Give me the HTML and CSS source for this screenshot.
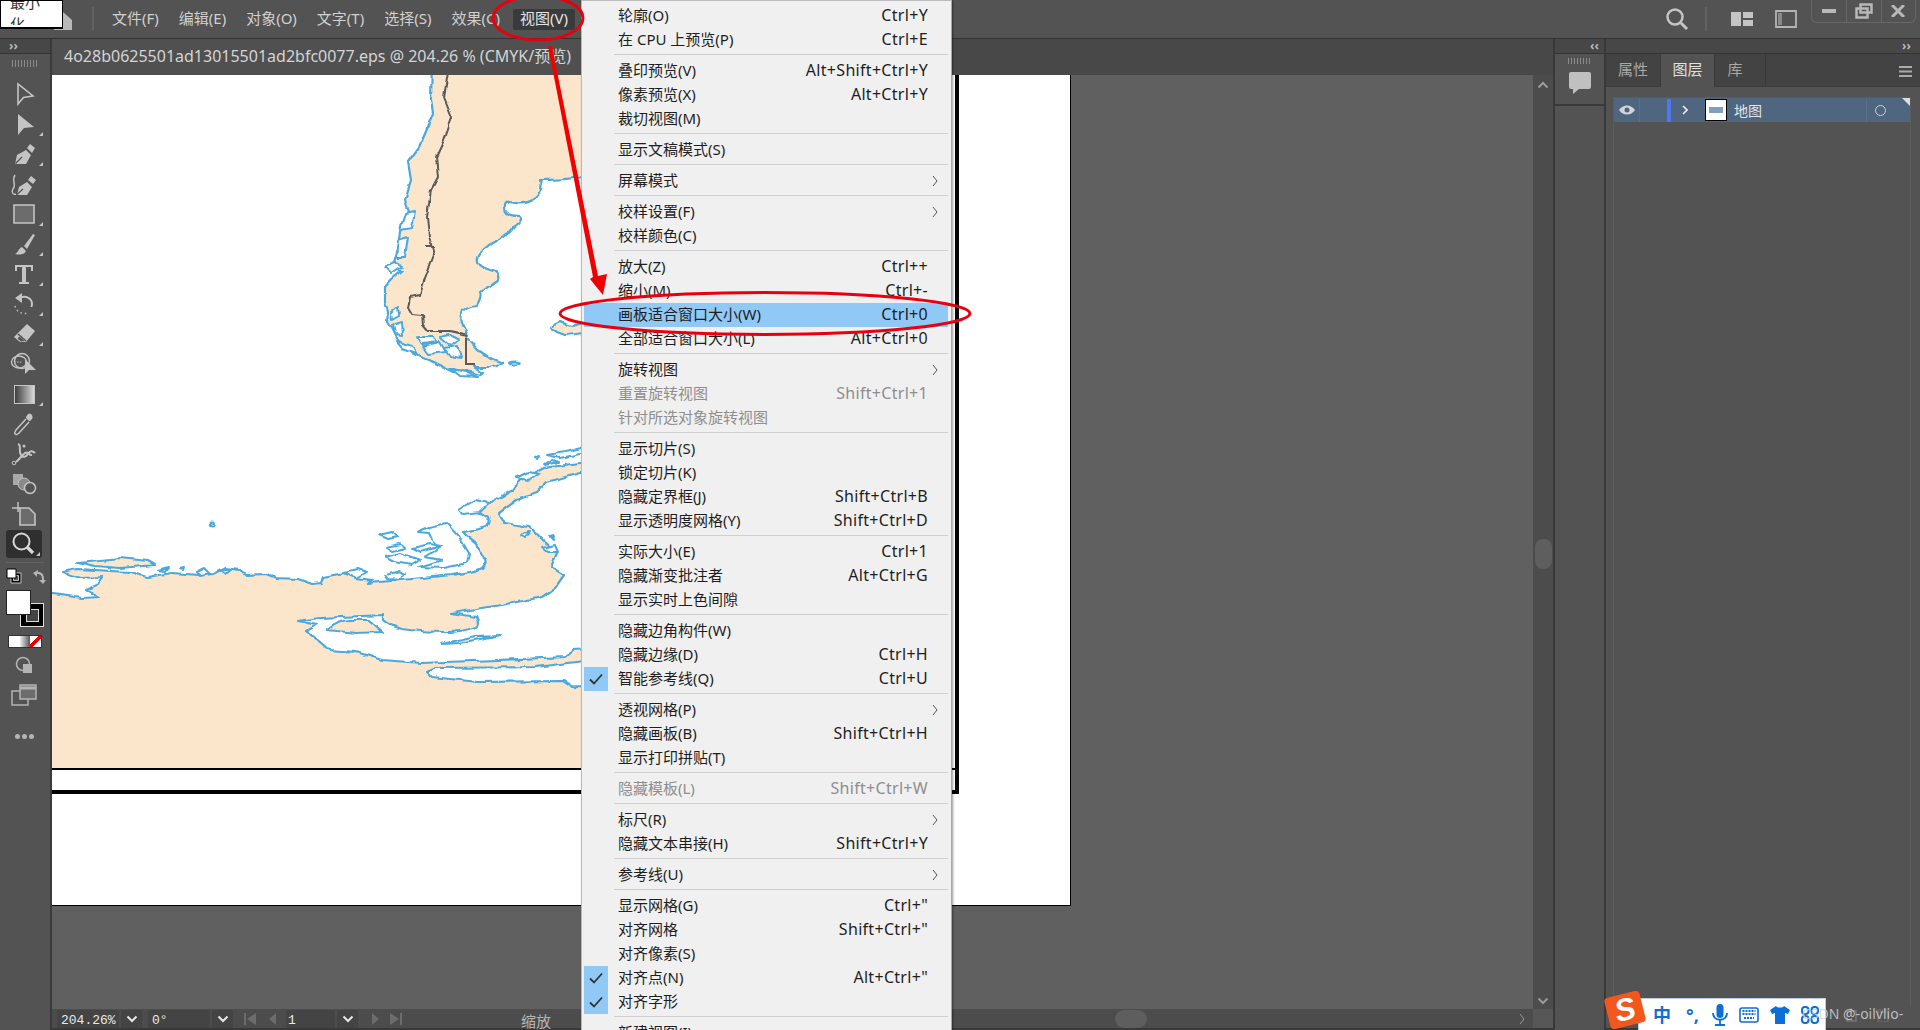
FILE: index.html
```html
<!DOCTYPE html>
<html lang="zh-CN">
<head>
<meta charset="utf-8">
<title>Illustrator</title>
<link rel="stylesheet" href="styles.css">
</head>
<body>
<svg class="defs" width="0" height="0">
  <symbol id="chev-d" viewBox="0 0 12 8"><path d="M1.5 1.5 6 6l4.500-4.500" fill="none" stroke="currentColor" stroke-width="2"/></symbol>
  <symbol id="chev-r" viewBox="0 0 6 12"><path d="M1 1l4 5-4 5" fill="none" stroke="currentColor" stroke-width="1"/></symbol>
  <symbol id="check" viewBox="0 0 14 12"><path d="M1 6.500 5 10.500 13 1.500" fill="none" stroke="currentColor" stroke-width="1.800"/></symbol>
  <filter id="rough" x="-5%" y="-5%" width="110%" height="110%"><feTurbulence type="fractalNoise" baseFrequency="0.09" numOctaves="2" seed="4"/><feDisplacementMap in="SourceGraphic" scale="5" xChannelSelector="R" yChannelSelector="G"/></filter>
</svg>
<div class="app">
  <header class="topbar">
    <svg class="home" width="22" height="22" viewBox="0 0 22 22"><path d="M2 10 11 2l9 8v10H2z" fill="#b8b8b8"/></svg>
    <span class="vsep"></span>
    <nav class="mainmenu">
      <span class="mm">文件(F)</span><span class="mm">编辑(E)</span><span class="mm">对象(O)</span><span class="mm">文字(T)</span><span class="mm">选择(S)</span><span class="mm">效果(C)</span><span class="mm active">视图(V)</span>
    </nav>
    <div class="topright">
      <svg width="24" height="24" viewBox="0 0 24 24"><circle cx="10" cy="10" r="7.500" fill="none" stroke="#c4c4c4" stroke-width="2.500"/><path d="M15.500 15.500 22 22" stroke="#c4c4c4" stroke-width="3"/></svg>
      <span class="vsep sep2"></span>
      <svg class="tr2" width="24" height="16" viewBox="0 0 24 16"><path d="M1 1h10v14H1zM13 1h10v6H13zM13 9h10v6H13z" fill="#c4c4c4"/></svg>
      <svg class="tr3" width="22" height="18" viewBox="0 0 22 18"><path d="M1 1h20v16H1z" fill="none" stroke="#b4b4b4" stroke-width="1.800"/><path d="M3 3h4v12H3z" fill="#8a8a8a"/></svg>
      <div class="winbtns">
        <span class="wb"><svg width="14" height="6"><path d="M0 1h14v4H0z" fill="#b8b8b8"/></svg></span>
        <span class="wb"><svg width="18" height="16" viewBox="0 0 18 16"><path d="M5.500 1.500h11v8h-11zM1.500 5.500h11v9h-11z" fill="none" stroke="#b8b8b8" stroke-width="2.500"/></svg></span>
        <span class="wb"><svg width="14" height="12" viewBox="0 0 14 12"><path d="M1 0l12 12M13 0 1 12" stroke="#b8b8b8" stroke-width="3"/></svg></span>
      </div>
    </div>
  </header>

  <div class="work">
    <aside class="toolbar">
      <div class="strip"><span class="dbl">››</span></div>
      <div class="grip"></div>
      <div class="tools">
        <div class="tool"><svg width="24" height="24" viewBox="0 0 24 24"><path d="M6 2v20l5.500-6.500L21 14z" fill="none" stroke="#c4c4c4" stroke-width="1.600"/></svg></div>
        <div class="tool more"><svg width="24" height="24" viewBox="0 0 24 24"><path d="M6 2v21l6-7 10-1z" fill="#c4c4c4"/></svg></div>
        <div class="tool more"><svg width="24" height="24" viewBox="0 0 24 24"><path d="M3 22l2-9 9-5 5 5-5 9zM15 6l3-4 5 4-3 5z" fill="#c4c4c4"/><path d="M3.500 21.500 10 15" stroke="#535353" stroke-width="1.200"/></svg></div>
        <div class="tool"><svg width="28" height="24" viewBox="0 0 28 24"><path d="M7 23l2-8 8-5 5 5-5 8zM18 8l3-4 5 4-3 4z" fill="#c4c4c4"/><path d="M7 22.500 13 17" stroke="#535353" stroke-width="1.200"/><path d="M5 3C1 9 7 12 3 17c-2 3 0 6 3 5" fill="none" stroke="#c4c4c4" stroke-width="1.400"/></svg></div>
        <div class="tool more"><svg width="24" height="22" viewBox="0 0 24 22"><path d="M2 2h20v18H2z" fill="#6c6c6c" stroke="#c4c4c4" stroke-width="1.600"/></svg></div>
        <div class="tool more"><svg width="24" height="24" viewBox="0 0 24 24"><path d="M21 2 12 14l3 3 8-14zM10 15l4 4c-2 4-6 4-11 3 3-1 3-5 7-7z" fill="#c4c4c4"/></svg></div>
        <div class="tool more"><svg width="24" height="24" viewBox="0 0 24 24"><path d="M3 3h18v6h-2V5h-5v15h3v2H7v-2h3V5H5v4H3z" fill="#c4c4c4"/></svg></div>
        <div class="tool more"><svg width="24" height="24" viewBox="0 0 24 24"><path d="M8 6c5-3 12 0 12 6 0 1-.3 2-.7 3" fill="none" stroke="#c4c4c4" stroke-width="2"/><path d="M10 1v10L3 6z" fill="#c4c4c4"/><path d="M3 14c1 5 6 9 14 7" fill="none" stroke="#c4c4c4" stroke-width="1.400" stroke-dasharray="1.500 3"/></svg></div>
        <div class="tool more"><svg width="24" height="24" viewBox="0 0 24 24"><path d="M15 2l8 7-9 11H8l-6-5z" fill="#c4c4c4"/><path d="M6 12l8 7" stroke="#535353" stroke-width="1.500"/><path d="M7.500 14.500l5 4.500-3.500.5-3.500-3z" fill="#535353"/></svg></div>
        <div class="tool"><svg width="28" height="24" viewBox="0 0 28 24"><ellipse cx="9" cy="10" rx="7.500" ry="6" fill="none" stroke="#c4c4c4" stroke-width="1.400"/><circle cx="12" cy="9" r="7.500" fill="none" stroke="#c4c4c4" stroke-width="1.400"/><path d="M4 10h9" stroke="#c4c4c4" stroke-dasharray="1.500 1.500"/><path d="M15 7v15l4-4 7 0z" fill="#c4c4c4"/></svg></div>
        <div class="tool more"><div class="gradbox"></div></div>
        <div class="tool"><svg width="24" height="24" viewBox="0 0 24 24"><path d="M16 2c2-2 6 2 4 5l-2 2-1 0-3-3 0-1z" fill="#c4c4c4"/><path d="M14 7 4 18c-1 2-2 3-1 4s3 0 4-1L17 10" fill="none" stroke="#c4c4c4" stroke-width="1.500"/></svg></div>
        <div class="tool"><svg width="26" height="24" viewBox="0 0 26 24"><path d="M7 2c4 1 0 7 3 11 2 3 5 2 7-1 2-3 4-4 7-1M5 20c3-2 5-6 9-9 3-2 4 3 7 2" fill="none" stroke="#c4c4c4" stroke-width="2"/><circle cx="3" cy="21" r="1.800" fill="none" stroke="#c4c4c4"/><circle cx="13" cy="4" r="1.500" fill="#c4c4c4"/></svg></div>
        <div class="tool"><svg width="26" height="24" viewBox="0 0 26 24"><path d="M2 2h10v11H2z" fill="#a8a8a8"/><circle cx="13" cy="12" r="6" fill="#8a8a8a" stroke="#c4c4c4"/><circle cx="19" cy="16" r="5.500" fill="#535353" stroke="#c4c4c4" stroke-width="1.500"/></svg></div>
        <div class="tool"><svg width="26" height="24" viewBox="0 0 26 24"><path d="M7 0v10M1 6h8" stroke="#c4c4c4" stroke-width="1.400"/><path d="M9 6h9l6 6v11H9z" fill="#6c6c6c" stroke="#c4c4c4" stroke-width="1.600"/></svg></div>
        <div class="tool current"><svg width="26" height="26" viewBox="0 0 26 26"><circle cx="10.500" cy="10.500" r="8" fill="none" stroke="#d8d8d8" stroke-width="2"/><path d="M16 16l6 6" stroke="#d8d8d8" stroke-width="3.200"/></svg></div>
      </div>
      <div class="toolsep"></div>
      <div class="swaprow">
        <svg width="16" height="16" viewBox="0 0 16 16"><path d="M5 5h10v10H5z" fill="#000" stroke="#c4c4c4"/><path d="M7.500 7.500h5v5h-5z" fill="#535353" stroke="#c4c4c4"/><path d="M1 1h9v9H1z" fill="#fff" stroke="#000"/></svg>
        <svg width="15" height="16" viewBox="0 0 15 16"><path d="M7 2 2 5l4 4V6c4 0 5 2 5 6H8l4 4 3-4h-2c0-6-2-8-6-8z" fill="#b4b4b4"/></svg>
      </div>
      <div class="fillstroke">
        <div class="stroke"></div>
        <div class="fill"></div>
      </div>
      <div class="modes"><span class="m-w"></span><span class="m-g"></span><span class="m-n"></span></div>
      <div class="tool2"><svg width="18" height="18" viewBox="0 0 18 18"><circle cx="8" cy="8" r="6.500" fill="none" stroke="#b4b4b4" stroke-width="1.500"/><path d="M8 8h9v9H8z" fill="#b4b4b4"/></svg></div>
      <div class="tool2 t3"><svg width="26" height="22" viewBox="0 0 26 22"><path d="M1 7h16v14H1z" fill="none" stroke="#b4b4b4" stroke-width="1.500"/><path d="M9 1h16v14H9z" fill="#6c6c6c" stroke="#b4b4b4" stroke-width="1.500"/><path d="M9 4h16" stroke="#b4b4b4" stroke-width="3"/></svg></div>
      <div class="dots"><i></i><i></i><i></i></div>
    </aside>

    <main class="doc">
      <div class="doctabs"><div class="doctab">4o28b0625501ad13015501ad2bfc0077.eps @ 204.26 % (CMYK/预览)</div></div>
      <div class="docbody">
        <div class="canvas">
          <div class="artboard">
            <svg class="map" width="1018" height="830" viewBox="52 75 1018 830">
              <g filter="url(#rough)">
              <g fill="#fbe6cc" stroke="#4aa9df" stroke-width="2.200" stroke-linejoin="round">
                <path d="M432 60 431 100 433 113 427 128 419 147 408 162 411 180 405 200 409 212 403 220 400 232 397 250 393 262 385 267 402 271 392 279 385 287 385 302 388 312 387 322 392 330 397 340 407 346 413 353 423 358 433 362 445 368 453 372 462 370 470 372 480 375 484 372 473 367 490 367 503 363 490 358 478 350 467 338 468 335Q458 322 461 314 464 306 477 305 482 296 480 292 490 286 498 280 500 272 490 270 476 266 478 258 482 248 497 240 510 234 513 228 524 220 520 216 505 216 505 208 504 200 510 202 525 206 536 198 542 190 540 180 560 180 574 178L600 176V60Z"/>
                <path d="M550 327 560 322 572 326 585 322 585 333 565 335 557 332Z"/>
                <path d="M40 592 82 598 99 597 86 590 98 585 103 577 80 578 63 572 78 569 111 571 130 572 147 577 172 573 199 575 214 574 226 568 239 570 245 575 266 574 276 578 298 579 312 584 321 583 323 577 344 573 356 578 373 580 369 583 402 580 452 575 Q475 572 482 568 488 562 484 558 480 548 475 543 468 538 463 532 476 530 486 527 490 522 488 517L478 510 490 503 513 490 520 480 543 468 580 463 600 462 600 473 580 473 547 482 536 493 517 500 499 513 505 523 530 527 543 540 557 553 551 567 564 575 555 588 542 597 513 603 452 613 476 617 Q480 625 476 627 460 632 448 632 420 632 402 629 388 625 383 620V615L321 618 298 621 318 625 306 632 320 642 329 650 356 652 383 660 421 663 497 660 566 657 574 650 600 648 600 659 536 667 436 668 427 672 432 677 478 682 563 681 572 687 600 688 600 785 40 785Z"/>
                <path d="M327 630Q340 620 350 620L369 620 383 632 356 633Z"/>
                <path d="M442 644 475 636 501 635 459 643Z"/>
                <path d="M77 562 100 560 120 558 148 561 155 565 120 568 95 566Z"/>
              </g>
              <g fill="#fff" stroke="#4aa9df" stroke-width="2" stroke-linejoin="round">
                <path d="M417 532 429 527 446 523 459 537 469 553 467 563 444 568 419 567 442 560 425 557 440 548 432 540 429 533Z"/>
                <path d="M379 535 392 532 398 537 388 539Z"/>
                <path d="M386 547 400 544 405 548 392 551Z"/>
                <path d="M385 557 400 553 420 560 412 565 395 562Z"/>
                <path d="M412 548 430 544 442 546 420 552Z"/>
                <path d="M459 510 475 500 490 503 480 512 462 514Z"/>
                <path d="M516 478 528 472 538 474 528 480Z"/>
                <path d="M547 455 565 452 585 447 585 453 560 458Z"/>
                <path d="M535 458 540 456 538 460Z"/>
                <path d="M545 465 553 460 558 462Z"/>
                <ellipse cx="212" cy="524" rx="2" ry="1.500"/>
                <path d="M196 572 204 568 210 574 200 576Z"/>
                <path d="M222 571 232 569 226 574Z"/>
                <path d="M158 570 168 567 165 571Z"/>
                <path d="M180 568 184 567 183 569Z"/>
                <path d="M344 572 358 569 366 572 356 578Z"/>
                <path d="M385 575 398 571 405 574 400 580 388 579Z"/>
                <path d="M520 535 530 532 525 538Z"/>
                <path d="M550 537 554 536 553 540Z"/>
                <path d="M543 548 555 545 558 552 548 552Z"/>
                <path d="M405 213 415 211 412 228 400 230Z"/>
                <path d="M398 240 408 237 405 258 396 258Z"/>
                <path d="M385 266 394 262 402 267 392 274Z"/>
                <path d="M391 312 398 306 399 316 392 320Z"/>
                <path d="M392 325 402 322 403 335 394 334Z"/>
                <path d="M417 337 432 337 438 342 422 344Z"/>
                <path d="M422 346 440 342 446 352 428 354Z"/>
                <path d="M440 337 450 335 460 340 450 346Z"/>
                <path d="M444 348 458 346 462 358 450 356Z"/>
                <path d="M396 341 412 346 418 354 402 348Z"/>
                <path d="M450 368 465 372 478 377 460 376Z"/>
                <ellipse cx="514" cy="363" rx="5" ry="1.500"/>
              </g>
              <g fill="none" stroke="#5a5a5a" stroke-width="2" stroke-linejoin="round">
                <path d="M450 60 444 97 452 117 444 140 436 157 438 177 431 190 427 217 429 237 434 255 425 278 420 295 410 297 408 308 412 315 422 316 423 325 428 331 450 331 468 335"/>
                <path d="M425 247H434"/>
              </g>
              </g>
              <path d="M466 338V364H475" fill="none" stroke="#5a5a5a" stroke-width="2"/>
              <rect x="52" y="770" width="910" height="20" fill="#fff"/>
              <path d="M52 769H955" stroke="#000" stroke-width="2"/>
              <path d="M52 792H959" stroke="#000" stroke-width="4"/>
              <path d="M957 75V794" stroke="#000" stroke-width="4"/>
            </svg>
          </div>
        </div>
        <div class="vscroll">
          <svg class="upch" width="12" height="8"><use href="#chev-d"/></svg>
          <div class="vthumb"></div>
          <svg class="downch" width="12" height="8"><use href="#chev-d"/></svg>
        </div>
      </div>
      <div class="hbar">
        <div class="st f1">204.26%</div><div class="dd"><svg width="12" height="8"><use href="#chev-d"/></svg></div>
        <div class="st f2">0°</div><div class="dd"><svg width="12" height="8"><use href="#chev-d"/></svg></div>
        <svg class="nav1" width="32" height="12" viewBox="0 0 32 12"><path d="M0 0h2v12H0zM12 0v12L3 6zM32 0v12l-7-6z" fill="#6c6c6c"/></svg>
        <div class="st f3">1</div><div class="dd"><svg width="12" height="8"><use href="#chev-d"/></svg></div>
        <svg class="nav2" width="30" height="12" viewBox="0 0 30 12"><path d="M0 0v12l7-6zM18 0v12l9-6zM28 0h2v12h-2z" fill="#6c6c6c"/></svg>
        <div class="zoomlbl">缩放</div>
        <div class="hthumb"></div>
        <svg class="hright" width="6" height="12"><use href="#chev-r"/></svg>
        <div class="corner"></div>
      </div>
    </main>

    <aside class="dockmini">
      <div class="strip"><span class="dbl rt">‹‹</span></div>
      <div class="cmt">
        <div class="grip g2"></div>
        <svg width="24" height="24" viewBox="0 0 24 24"><path d="M3 1h18a2 2 0 0 1 2 2v13a2 2 0 0 1-2 2H11l-6 5v-5H3a2 2 0 0 1-2-2V3a2 2 0 0 1 2-2z" fill="#c0c0c0"/></svg>
      </div>
    </aside>

    <aside class="panels">
      <div class="strip"><span class="dbl rt2">››</span></div>
      <div class="ptabs">
        <span class="ptab">属性</span><span class="ptab on">图层</span><span class="ptab lib">库</span>
        <svg class="hamb" width="13" height="11" viewBox="0 0 13 11"><path d="M0 0h13v2H0zM0 4.500h13v2H0zM0 9h13v2H0z" fill="#aaa"/></svg>
      </div>
      <div class="pbody">
        <div class="layer">
          <div class="eye"><svg width="16" height="10" viewBox="0 0 16 10"><path d="M0 5c4-6 12-6 16 0-4 6-12 6-16 0z" fill="#d4d4d4"/><circle cx="8" cy="5" r="2.500" fill="#4f6680"/></svg></div>
          <div class="lockcell"></div>
          <div class="lcolor"></div>
          <svg class="lchev" width="6" height="10" viewBox="0 0 6 10"><path d="M1 1l4 4-4 4" fill="none" stroke="#eee" stroke-width="1.600"/></svg>
          <div class="thumb"><i></i></div>
          <div class="lname">地图</div>
          <div class="ltarget"><span></span></div>
        </div>
      </div>
      <div class="pfoot">
        <svg width="14" height="14" viewBox="0 0 14 14"><path d="M1 3h9v10H1zM5 0v6M2 3h6" fill="none" stroke="#777" stroke-width="1.500"/></svg>
        <svg width="14" height="14" viewBox="0 0 14 14"><path d="M2 4h10v10H2zM0 2h14" fill="none" stroke="#6a6a6a" stroke-width="1.500"/></svg>
      </div>
    </aside>
  </div>

  <div class="menu">
    <div class="mi"><span class="ck"></span><span class="lb">轮廓(O)</span><span class="sc">Ctrl+Y</span></div>
    <div class="mi"><span class="ck"></span><span class="lb">在 CPU 上预览(P)</span><span class="sc">Ctrl+E</span></div>
    <div class="sep"></div>
    <div class="mi"><span class="ck"></span><span class="lb">叠印预览(V)</span><span class="sc">Alt+Shift+Ctrl+Y</span></div>
    <div class="mi"><span class="ck"></span><span class="lb">像素预览(X)</span><span class="sc">Alt+Ctrl+Y</span></div>
    <div class="mi"><span class="ck"></span><span class="lb">裁切视图(M)</span></div>
    <div class="sep"></div>
    <div class="mi"><span class="ck"></span><span class="lb">显示文稿模式(S)</span></div>
    <div class="sep"></div>
    <div class="mi"><span class="ck"></span><span class="lb">屏幕模式</span><svg class="ar" width="6" height="12"><use href="#chev-r"/></svg></div>
    <div class="sep"></div>
    <div class="mi"><span class="ck"></span><span class="lb">校样设置(F)</span><svg class="ar" width="6" height="12"><use href="#chev-r"/></svg></div>
    <div class="mi"><span class="ck"></span><span class="lb">校样颜色(C)</span></div>
    <div class="sep"></div>
    <div class="mi"><span class="ck"></span><span class="lb">放大(Z)</span><span class="sc">Ctrl++</span></div>
    <div class="mi"><span class="ck"></span><span class="lb">缩小(M)</span><span class="sc">Ctrl+-</span></div>
    <div class="mi hl"><span class="ck"></span><span class="lb">画板适合窗口大小(W)</span><span class="sc">Ctrl+0</span></div>
    <div class="mi"><span class="ck"></span><span class="lb">全部适合窗口大小(L)</span><span class="sc">Alt+Ctrl+0</span></div>
    <div class="sep"></div>
    <div class="mi"><span class="ck"></span><span class="lb">旋转视图</span><svg class="ar" width="6" height="12"><use href="#chev-r"/></svg></div>
    <div class="mi dis"><span class="ck"></span><span class="lb">重置旋转视图</span><span class="sc">Shift+Ctrl+1</span></div>
    <div class="mi dis"><span class="ck"></span><span class="lb">针对所选对象旋转视图</span></div>
    <div class="sep"></div>
    <div class="mi"><span class="ck"></span><span class="lb">显示切片(S)</span></div>
    <div class="mi"><span class="ck"></span><span class="lb">锁定切片(K)</span></div>
    <div class="mi"><span class="ck"></span><span class="lb">隐藏定界框(J)</span><span class="sc">Shift+Ctrl+B</span></div>
    <div class="mi"><span class="ck"></span><span class="lb">显示透明度网格(Y)</span><span class="sc">Shift+Ctrl+D</span></div>
    <div class="sep"></div>
    <div class="mi"><span class="ck"></span><span class="lb">实际大小(E)</span><span class="sc">Ctrl+1</span></div>
    <div class="mi"><span class="ck"></span><span class="lb">隐藏渐变批注者</span><span class="sc">Alt+Ctrl+G</span></div>
    <div class="mi"><span class="ck"></span><span class="lb">显示实时上色间隙</span></div>
    <div class="sep"></div>
    <div class="mi"><span class="ck"></span><span class="lb">隐藏边角构件(W)</span></div>
    <div class="mi"><span class="ck"></span><span class="lb">隐藏边缘(D)</span><span class="sc">Ctrl+H</span></div>
    <div class="mi"><span class="ck on"><svg width="14" height="12"><use href="#check"/></svg></span><span class="lb">智能参考线(Q)</span><span class="sc">Ctrl+U</span></div>
    <div class="sep"></div>
    <div class="mi"><span class="ck"></span><span class="lb">透视网格(P)</span><svg class="ar" width="6" height="12"><use href="#chev-r"/></svg></div>
    <div class="mi"><span class="ck"></span><span class="lb">隐藏画板(B)</span><span class="sc">Shift+Ctrl+H</span></div>
    <div class="mi"><span class="ck"></span><span class="lb">显示打印拼贴(T)</span></div>
    <div class="sep"></div>
    <div class="mi dis"><span class="ck"></span><span class="lb">隐藏模板(L)</span><span class="sc">Shift+Ctrl+W</span></div>
    <div class="sep"></div>
    <div class="mi"><span class="ck"></span><span class="lb">标尺(R)</span><svg class="ar" width="6" height="12"><use href="#chev-r"/></svg></div>
    <div class="mi"><span class="ck"></span><span class="lb">隐藏文本串接(H)</span><span class="sc">Shift+Ctrl+Y</span></div>
    <div class="sep"></div>
    <div class="mi"><span class="ck"></span><span class="lb">参考线(U)</span><svg class="ar" width="6" height="12"><use href="#chev-r"/></svg></div>
    <div class="sep"></div>
    <div class="mi"><span class="ck"></span><span class="lb">显示网格(G)</span><span class="sc">Ctrl+"</span></div>
    <div class="mi"><span class="ck"></span><span class="lb">对齐网格</span><span class="sc">Shift+Ctrl+"</span></div>
    <div class="mi"><span class="ck"></span><span class="lb">对齐像素(S)</span></div>
    <div class="mi"><span class="ck on"><svg width="14" height="12"><use href="#check"/></svg></span><span class="lb">对齐点(N)</span><span class="sc">Alt+Ctrl+"</span></div>
    <div class="mi"><span class="ck on"><svg width="14" height="12"><use href="#check"/></svg></span><span class="lb">对齐字形</span></div>
    <div class="sep"></div>
    <div class="mi"><span class="ck"></span><span class="lb">新建视图(I)</span></div>
  </div>

  <div class="tip">
    <div class="tl1"><span>最小</span></div>
    <div class="tl2"><span>化</span></div>
  </div>

  <svg class="annot" width="1920" height="1030" viewBox="0 0 1920 1030">
    <ellipse cx="538" cy="18" rx="45" ry="22" fill="none" stroke="#e8000e" stroke-width="3"/>
    <ellipse cx="765" cy="313.500" rx="205" ry="21" fill="none" stroke="#e8000e" stroke-width="3"/>
    <path d="M548 46H552L598 276 607 274 603 295 590 279 593 277Z" fill="#f00000"/>
  </svg>

  <div class="ime">
    <div class="slogo"><span>S</span></div>
    <span class="zh">中</span>
    <span class="pt">°,</span>
    <svg width="16" height="22" viewBox="0 0 16 22"><rect x="4.500" y="0" width="7" height="14" rx="3.500" fill="#0b6fd6"/><path d="M1 9c0 9 14 9 14 0M8 16v4M3 21h10" fill="none" stroke="#0b6fd6" stroke-width="1.800"/></svg>
    <svg width="20" height="16" viewBox="0 0 20 16"><rect x="1" y="1" width="18" height="14" rx="2" fill="none" stroke="#0b6fd6" stroke-width="1.600"/><path d="M3.500 4h13M3.500 7h13M5 11h10" stroke="#0b6fd6" stroke-width="2" stroke-dasharray="2 1"/></svg>
    <svg width="20" height="18" viewBox="0 0 20 18"><path d="M6 0 0 4l2 4 3-1v11h10V7l3 1 2-4-6-4c-1 2-7 2-8 0z" fill="#0b6fd6"/></svg>
    <svg width="18" height="18" viewBox="0 0 18 18"><g fill="none" stroke="#0b6fd6" stroke-width="2"><rect x="1" y="1" width="6.500" height="7" rx="3"/><rect x="10.500" y="1" width="6.500" height="7" rx="3"/><rect x="1" y="10" width="6.500" height="7" rx="3"/><rect x="10.500" y="10" width="6.500" height="7" rx="3"/></g></svg>
  </div>
  <div class="wm">CSDN @-oilvlio-</div>
</div>
</body>
</html>
```
FILE: styles.css
```css
*{box-sizing:border-box}
html,body{margin:0;padding:0;background:#535353}
body{font-family:"Noto Sans","Noto Sans CJK SC",sans-serif;font-size:15px}
.defs{position:absolute}
.app{position:relative;width:1920px;height:1030px;overflow:hidden;display:flex;flex-direction:column;background:#535353;color:#cfcfcf}

.topbar{height:39px;flex:none;display:flex;align-items:center;padding-left:52px;background:#535353;border-bottom:1px solid #333}
.home{flex:none;margin-top:3px}
.vsep{width:2px;height:24px;background:#616161;flex:none;margin-left:18px}
.mainmenu{display:flex;align-items:center;margin-left:18px;color:#d0d0d0}
.mm{margin-right:20px;line-height:18px;padding-bottom:3px;white-space:nowrap}
.mm.active{background:#3a3a3a;margin-left:-7px;padding:0 7px 3px;border-radius:2px;color:#e4e4e4;margin-right:0}
.topright{margin-left:auto;display:flex;align-items:center;height:38px}
.sep2{margin-left:16px}
.tr2{margin-left:23px}
.tr3{margin-left:21px}
.winbtns{display:flex;align-self:flex-start;margin-left:14px;margin-right:4px;height:23px;border:1px solid #676767;border-top:0;border-radius:0 0 6px 6px}
.wb{width:34.500px;display:flex;align-items:center;justify-content:center;border-left:1px solid #676767}
.wb:first-child{border-left:0}

.work{flex:1;display:flex;min-height:0}
.strip{height:15px;background:#474747;border-bottom:1px solid #333;position:relative;flex:none}
.dbl{position:absolute;font-size:12px;line-height:13px;left:9px;top:0;color:#b8b8b8;font-weight:700}
.dbl.rt{left:35px}
.dbl.rt2{left:296px}

.toolbar{width:52px;flex:none;display:flex;flex-direction:column;background:#535353;border-right:2px solid #3a3a3a}
.grip{height:7px;margin:6px 12px 0;background:repeating-linear-gradient(90deg,#8a8a8a 0 1px,transparent 1px 3px);flex:none}
.tools{display:flex;flex-direction:column;margin-top:12px}
.tool{height:30px;width:36px;margin-left:6px;display:flex;align-items:center;justify-content:center;position:relative;flex:none}
.tool.more::after{content:"";position:absolute;right:-1px;bottom:3px;border-style:solid;border-width:0 0 4px 4px;border-color:transparent transparent #c4c4c4 transparent}
.tool.current{background:#2f2f2f;border-radius:3px;height:28px;margin-top:1px}
.tool.current::after{content:"";position:absolute;right:2px;bottom:2px;border-style:solid;border-width:0 0 4px 4px;border-color:transparent transparent #c4c4c4 transparent}
.gradbox{width:21px;height:19px;border:1px solid #c4c4c4;background:linear-gradient(90deg,#3e3e3e,#d8d8d8)}
.toolsep{height:1px;background:#646464;margin:4px 6px 0;flex:none}
.swaprow{display:flex;justify-content:space-between;padding:0 4px 0 6px;margin-top:5px;flex:none}
.fillstroke{position:relative;height:37px;margin-top:6px;flex:none}
.fill{position:absolute;left:6px;top:0;width:25px;height:25px;background:#fff;border:1px solid #222}
.stroke{position:absolute;left:20px;top:13px;width:24px;height:24px;background:#000;border:1px solid #ddd}
.stroke::after{content:"";position:absolute;left:5px;top:5px;width:11px;height:11px;border:1px solid #ddd;background:#444}
.modes{display:flex;width:34px;height:13px;margin:8px 0 0 8px;background:#333;border:1px solid #333;flex:none}
.modes span{flex:1}
.m-w{background:#fff}
.m-g{background:linear-gradient(90deg,#eee,#555)}
.m-n{background:linear-gradient(135deg,#fff 0 38%,#e00 38% 60%,#fff 60%)}
.tool2{height:20px;margin-top:7px;display:flex;align-items:center;justify-content:center;padding-right:2px;flex:none}
.tool2.t3{margin-top:8px;height:24px}
.dots{display:flex;justify-content:center;gap:2px;margin-top:27px;padding-right:2px}
.dots i{width:5px;height:5px;border-radius:50%;background:#b4b4b4}

.doc{width:1501px;flex:none;display:flex;flex-direction:column;min-height:0}
.doctabs{height:36px;flex:none;background:#484848}
.doctab{height:36px;width:560px;background:#505050;line-height:35px;padding-left:12px;color:#d4d4d4;font-size:16px;white-space:nowrap}
.docbody{flex:1;display:flex;min-height:0}
.canvas{flex:1;position:relative;background:#606060;overflow:hidden}
.artboard{position:absolute;left:0;top:0;width:1019px;height:831px;background:#fff;border-right:1px solid #000;border-bottom:1px solid #000}
.map{display:block}
.vscroll{width:20px;flex:none;background:#4c4c4c;display:flex;flex-direction:column;align-items:center;position:relative;color:#9a9a9a}
.upch{transform:rotate(180deg);margin-top:6px}
.vthumb{position:absolute;left:2px;top:464px;width:17px;height:30px;border-radius:8px;background:#5e5e5e}
.downch{margin-top:auto;margin-bottom:4px}
.hbar{height:21px;flex:none;display:flex;align-items:flex-start;background:#4c4c4c;border-bottom:2px solid #393939;padding:1px 0 0 5px;position:relative;color:#e8e8e8}
.st{height:18px;background:#444;font-family:"Liberation Mono",monospace;font-size:13px;line-height:21px;padding-left:4px;border-radius:2px 2px 0 0;overflow:hidden}
.f1{width:62px}
.f2{width:62px;margin-left:6px}
.f3{width:49px;margin-left:10px;padding-left:2px}
.dd{width:21px;height:18px;margin-left:2px;background:#444;display:flex;align-items:center;justify-content:center;border-radius:2px 2px 0 0}
.nav1{margin:3px 0 0 11px}
.nav2{margin:3px 0 0 14px}
.zoomlbl{position:absolute;left:469px;top:2px;font-size:15px;line-height:20px;color:#b4b4b4}
.hthumb{position:absolute;left:1063px;top:1px;width:32px;height:18px;border-radius:9px;background:#5e5e5e}
.hright{position:absolute;left:1467px;top:4px;color:#9a9a9a}
.corner{position:absolute;right:0;top:0;width:20px;height:19px;background:#575757}

.dockmini{width:53px;flex:none;display:flex;flex-direction:column;background:#535353;border-left:2px solid #393939;border-right:2px solid #393939}
.cmt{height:52px;border-bottom:2px solid #393939;display:flex;flex-direction:column;align-items:center;flex:none}
.g2{width:24px;margin:4px 0 0;height:6px;flex:none}
.cmt svg{margin-top:7px}

.panels{flex:1;min-width:0;display:flex;flex-direction:column;background:#535353}
.ptabs{height:33px;flex:none;display:flex;background:#434343;position:relative;border-bottom:1px solid #3c3c3c}
.ptab{line-height:30px;text-align:center;color:#a8a8a8;font-size:15px;width:55px;border-right:1px solid #393939}
.ptab.lib{width:51px;padding-right:10px}
.ptab.on{background:#535353;color:#e0e0e0;height:33px;width:54px}
.hamb{position:absolute;right:8px;top:12px}
.pbody{flex:1;margin:10px 9px 0 7px;border:1px solid #5c5c5c;border-bottom:0;min-height:0}
.layer{height:24px;background:#4f6680;display:flex;align-items:center;position:relative;color:#e4e4e4}
.layer::after{content:"";position:absolute;right:0;top:0;border-style:solid;border-width:0 8px 8px 0;border-color:transparent #ddd transparent transparent}
.eye{width:26px;height:100%;display:flex;align-items:center;justify-content:center;border-right:1px solid #5a7088}
.lockcell{width:27px;height:100%;flex:none}
.lcolor{width:4px;height:23px;background:#4f78f0;flex:none}
.lchev{margin-left:11px;flex:none}
.thumb{width:22px;height:22px;margin-left:17px;background:#fff;border:1px solid #000;display:flex;align-items:center;justify-content:center;flex:none}
.thumb i{width:14px;height:6px;background:#7fa0b8}
.lname{margin-left:7px;font-size:14px}
.ltarget{margin-left:auto;width:44px;height:100%;border-left:1px solid #5a7088;display:flex;align-items:center;justify-content:center}
.ltarget span{width:11px;height:11px;border:1.500px solid #d0d0d0;border-radius:50%;margin-right:16px}
.pfoot{height:24px;flex:none;display:flex;align-items:center;justify-content:flex-end;gap:16px;padding:0 30px 4px 0;border-bottom:2px solid #393939}

.menu{position:absolute;left:581px;top:0;width:371px;height:1030px;overflow:hidden;padding:4px 3px 0 2px;background:#f0f0f0;border-left:1px solid #b8b8b8;border-right:1px solid #a8a8a8;border-top:1px solid #bbb;color:#1e1e1e;font-size:15px;box-shadow:1px 0 2px rgba(0,0,0,.4)}
.mi{height:24px;display:flex;align-items:center;line-height:24px;white-space:nowrap;position:relative;margin-top:0}
.menu .mi:first-child{margin-top:-1px}
.lb{margin-top:-2px}
.ck{width:24px;height:24px;flex:none;margin-right:10px;display:flex;align-items:center;justify-content:center;color:#333}
.ck.on{background:#90c8f6}
.sc{margin-left:auto;margin-right:20px;margin-top:-2px;font-size:16px;letter-spacing:.3px}
.ar{margin-left:auto;margin-right:10px;color:#555;flex:none}
.hl{background:#90c8f6}
.dis{color:#8e8e8e}
.sep{height:1px;margin:2px 0 4px 30px;background:#cfcfcf}

.tip{position:absolute;left:0;top:0;width:63px;height:29px;background:#fff;border:1px solid #000;border-bottom-width:2px;color:#333;font-size:15px;padding-left:9px}
.tl1{height:11px;overflow:hidden;display:flex;align-items:flex-end}
.tl1 span{line-height:20px;flex:none}
.tl2{height:8px;margin-top:5px;overflow:hidden}
.tl2 span{display:block;line-height:16px;margin-top:-1px}

.annot{position:absolute;left:0;top:0;pointer-events:none}

.ime{position:absolute;left:1638px;top:998px;width:188px;height:32px;background:#fff;border:1px solid #b8cfe8;border-bottom:0;display:flex;align-items:center;gap:11px;padding-left:14px}
.slogo{position:absolute;left:-32px;top:-5px;width:36px;height:32px;border-radius:4px;background:#f4571e;transform:rotate(-14deg);display:flex;align-items:center;justify-content:center}
.slogo span{font-family:"Liberation Sans",sans-serif;font-weight:700;font-style:italic;font-size:31px;line-height:32px;color:#fff}
.zh{font-size:18px;color:#0b6fd6;font-weight:700;line-height:20px;width:20px}
.pt{font-size:18px;color:#0b6fd6;font-weight:700;line-height:20px;width:17px;text-align:center}
.wm{position:absolute;left:1802px;top:1004px;font-size:14px;line-height:20px;color:rgba(210,210,210,.85);white-space:nowrap}
```
